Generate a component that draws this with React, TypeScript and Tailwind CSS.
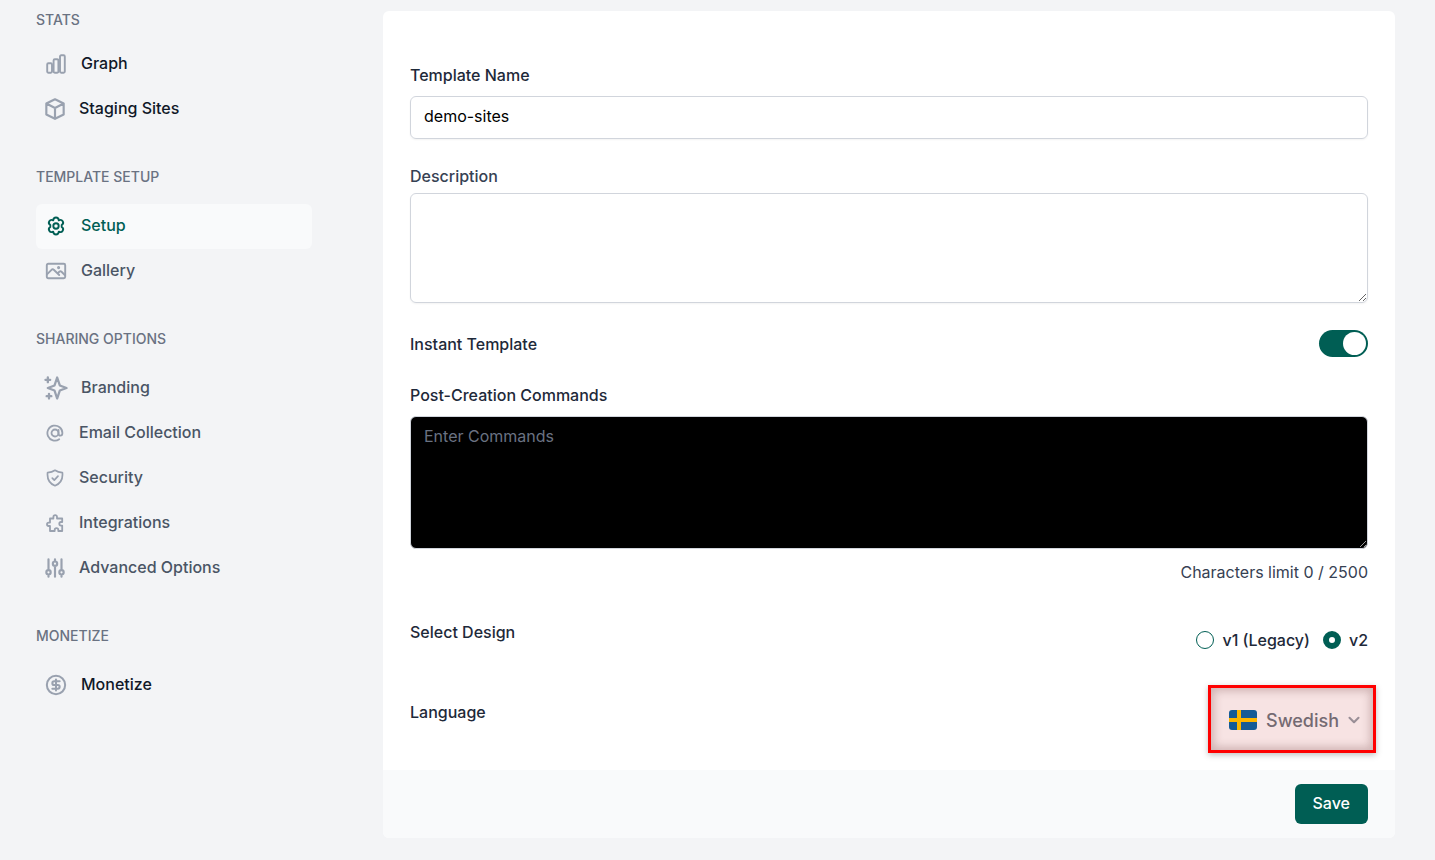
import { useState } from "react"
import type { ReactNode } from "react"
import { ChevronDown, CircleDollarSign } from "lucide-react"
import { HiOutlineAdjustments, HiOutlineCube, HiOutlineSparkles } from "react-icons/hi"

function GraphIcon() {
  return (
    <svg width="20" height="20" viewBox="0 0 20 20" fill="none" stroke="currentColor" strokeWidth="1.9">
      <rect x="1.2" y="9.2" width="4.8" height="9.6" rx="1.2" />
      <rect x="7.6" y="5.2" width="4.8" height="13.6" rx="1.2" />
      <rect x="14" y="1.2" width="4.8" height="17.6" rx="1.2" />
    </svg>
  )
}

function GearIcon() {
  return (
    <svg
      width="20"
      height="20"
      viewBox="0 0 20 20"
      fill="none"
      stroke="currentColor"
      strokeWidth="1.9"
      strokeLinejoin="round"
    >
      <path d="M7.2 4.3C7.4 2 8.200 1.500 10 1.500s2.600.5 2.800 2.800c2.100-1 3-.500 3.900 1s.9 2.500-1 3.700v2c1.900 1.200 1.900 2.200 1 3.700s-1.800 2-3.900 1c-.2 2.300-1 2.800-2.800 2.800s-2.600-.5-2.800-2.800c-2.100 1-3 .5-3.900-1s-.9-2.500 1-3.700V9c-1.900-1.200-1.900-2.200-1-3.700s1.800-2 3.900-1z" />
      <circle cx="10" cy="10" r="2.7" />
    </svg>
  )
}

function GalleryIcon() {
  return (
    <svg
      width="22"
      height="18"
      viewBox="0 0 22 18"
      fill="none"
      stroke="currentColor"
      strokeWidth="1.9"
      strokeLinecap="round"
      strokeLinejoin="round"
    >
      <rect x="1.8" y="1.8" width="18.4" height="14.4" rx="1.4" />
      <path d="M2.2 12.2l4.3-4.4a1.6 1.6 0 012.3 0l5.4 5.2M12.6 11.4l1.7-1.6a1.6 1.6 0 012.2 0l3.3 3.2" />
      <circle cx="13.6" cy="5.6" r="0.6" fill="currentColor" />
    </svg>
  )
}

function AtIcon() {
  return (
    <svg
      width="18"
      height="18"
      viewBox="0 0 18 18"
      fill="none"
      stroke="currentColor"
      strokeWidth="1.8"
      strokeLinecap="round"
    >
      <circle cx="9" cy="9" r="3.5" />
      <path d="M12.5 5.8v3.6c0 1.3.8 2.2 1.9 2.2 1.3 0 2-1.1 2-2.6a7.5 7.5 0 10-3.2 6.2" />
    </svg>
  )
}

function ShieldIcon() {
  return (
    <svg
      width="18"
      height="18"
      viewBox="0 0 18 18"
      fill="none"
      stroke="currentColor"
      strokeWidth="1.7"
      strokeLinecap="round"
      strokeLinejoin="round"
    >
      <path d="M9 1.3c2.1 1.5 4.5 2.2 7.4 2.3.6 5.9-1.6 10.9-7.4 13.1C3.2 14.5 1 9.5 1.6 3.6 4.5 3.5 6.9 2.8 9 1.3z" />
      <path d="M6.3 9.2l2 2L12 7.2" />
    </svg>
  )
}

function PuzzleIcon() {
  return (
    <svg
      width="18"
      height="18"
      viewBox="0 0 18 18"
      fill="none"
      stroke="currentColor"
      strokeWidth="1.8"
      strokeLinejoin="round"
    >
      <path d="M4 4.5h3.4V2.9a1.8 1.8 0 013.6 0v1.6h5.2V8h-1.1a1.8 1.8 0 000 3.6h1.1V17h-3.9v-1a1.8 1.8 0 00-3.6 0v1H4v-5H2.7a1.7 1.7 0 010-3.4H4z" />
    </svg>
  )
}

function SwedenFlag() {
  return (
    <svg className="shrink-0" width="28" height="20" viewBox="0 0 28 20" aria-hidden="true">
      <clipPath id="flag">
        <rect width="28" height="20" rx="3" />
      </clipPath>
      <g clipPath="url(#flag)">
        <rect width="28" height="20" fill="#155b97" />
        <path d="M8 0h4v20H8zM0 8h28v4H0z" fill="#fdb600" />
      </g>
    </svg>
  )
}

interface NavItem {
  label: string
  icon: ReactNode
  wide?: boolean
  dark?: boolean
  active?: boolean
}

const sections: { title: string; items: NavItem[] }[] = [
  {
    title: "STATS",
    items: [
      { label: "Graph", icon: <GraphIcon />, wide: true, dark: true },
      { label: "Staging Sites", icon: <HiOutlineCube size={26} />, dark: true },
    ],
  },
  {
    title: "TEMPLATE SETUP",
    items: [
      { label: "Setup", icon: <GearIcon />, wide: true, active: true },
      { label: "Gallery", icon: <GalleryIcon />, wide: true },
    ],
  },
  {
    title: "SHARING OPTIONS",
    items: [
      { label: "Branding", icon: <HiOutlineSparkles size={28} />, wide: true },
      { label: "Email Collection", icon: <AtIcon /> },
      { label: "Security", icon: <ShieldIcon /> },
      { label: "Integrations", icon: <PuzzleIcon /> },
      { label: "Advanced Options", icon: <HiOutlineAdjustments size={26} /> },
    ],
  },
  {
    title: "MONETIZE",
    items: [
      { label: "Monetize", icon: <CircleDollarSign size={22} strokeWidth={2.2} />, wide: true, dark: true },
    ],
  },
]

function NavLink({ item }: { item: NavItem }) {
  const color = item.active ? "text-[#005e54]" : item.dark ? "text-gray-900" : "text-gray-600"

  return (
    <a
      href="#"
      className={`flex h-[45px] items-center gap-[11px] rounded-md px-1.5 pb-0.5 ${color} ${item.active ? "bg-gray-50" : ""}`}
    >
      <span
        className={`flex shrink-0 items-center justify-center ${item.wide ? "w-7" : "w-[26px]"} ${item.active ? "" : "text-gray-400"}`}
      >
        {item.icon}
      </span>
      <span className="pb-0.5">{item.label}</span>
    </a>
  )
}

function Sidebar() {
  return (
    <nav className="w-[276px] shrink-0 pt-2.5">
      {sections.map((section, i) => (
        <section key={section.title} className={i === 0 ? "" : "mt-[35px]"}>
          <h2 className={`text-sm text-gray-500 ${i === 0 ? "mb-3" : "mb-[17px]"}`}>{section.title}</h2>
          {section.items.map((item) => (
            <NavLink key={item.label} item={item} />
          ))}
        </section>
      ))}
    </nav>
  )
}

export default function App() {
  const [name, setName] = useState("demo-sites")
  const [description, setDescription] = useState("")
  const [instant, setInstant] = useState(true)
  const [commands, setCommands] = useState("")
  const [design, setDesign] = useState("v2")

  const radio =
    "size-[18px] appearance-none rounded-full border border-[#005e54] bg-white checked:border-[6px]"

  return (
    <div className="flex min-h-screen items-start bg-gray-100 pr-10 pl-9 font-['Inter',sans-serif] text-base font-medium text-gray-800">
      <Sidebar />

      <form
        className="mt-[11px] mb-[22px] ml-[71px] min-w-0 flex-1 overflow-hidden rounded-md bg-white"
        onSubmit={(e) => e.preventDefault()}
      >
        <div className="flex flex-col px-[27px] pt-[52px] pb-[17px]">
          <label htmlFor="name">Template Name</label>
          <input
            id="name"
            value={name}
            onChange={(e) => setName(e.target.value)}
            className="mt-[9px] h-[43px] w-full rounded-md border border-gray-300 px-[13px] pb-1 font-normal text-black shadow-xs outline-none"
          />

          <label htmlFor="description" className="mt-[25px] text-gray-700">
            Description
          </label>
          <textarea
            id="description"
            value={description}
            onChange={(e) => setDescription(e.target.value)}
            className="mt-[5px] h-[110px] w-full resize-y rounded-md border border-gray-300 px-[13px] py-2 font-normal shadow-xs outline-none"
          />

          <div className="mt-[27px] flex items-center justify-between">
            <label htmlFor="instant">Instant Template</label>
            <button
              id="instant"
              type="button"
              role="switch"
              aria-checked={instant}
              onClick={() => setInstant(!instant)}
              className={`flex h-[27px] w-[49px] items-center rounded-full px-0.5 ${instant ? "justify-end bg-[#005e54]" : "bg-gray-300"}`}
            >
              <span className="size-[23px] rounded-full bg-white" />
            </button>
          </div>

          <label htmlFor="commands" className="mt-[26px]">
            Post-Creation Commands
          </label>
          <textarea
            id="commands"
            value={commands}
            onChange={(e) => setCommands(e.target.value)}
            placeholder="Enter Commands"
            maxLength={2500}
            className="mt-[9px] h-[133px] w-full resize-y rounded-md border border-gray-300 bg-black px-[13px] py-[7px] font-normal text-white outline-none placeholder:text-gray-500"
          />
          <p className="mt-[11px] text-right font-normal text-gray-700">
            Characters limit {commands.length} / 2500
          </p>

          <fieldset className="mt-9 flex items-start justify-between">
            <legend className="float-left">Select Design</legend>
            <div className="flex items-center gap-[13px] pt-2">
              <label className="flex items-center gap-2">
                <input
                  type="radio"
                  name="design"
                  checked={design === "v1"}
                  onChange={() => setDesign("v1")}
                  className={radio}
                />
                v1 (Legacy)
              </label>
              <label className="flex items-center gap-2">
                <input
                  type="radio"
                  name="design"
                  checked={design === "v2"}
                  onChange={() => setDesign("v2")}
                  className={radio}
                />
                v2
              </label>
            </div>
          </fieldset>

          <div className="mt-[33px] flex items-start justify-between">
            <label htmlFor="language" className="pt-[15px]">
              Language
            </label>
            <div className="-mr-2 flex h-[68px] w-[168px] items-center border-[3px] border-[#ff0000] bg-[#f7e3e3] pt-0.5 pl-[18px] shadow-[0_2px_6px_rgba(0,0,0,0.25),inset_0_0_8px_3px_rgba(90,40,40,0.25)]">
              <SwedenFlag />
              <div className="relative flex-1 pt-0.5">
                <select
                  id="language"
                  defaultValue="sv"
                  className="w-full appearance-none bg-transparent pl-[9px] text-lg text-[#746a72] outline-none"
                >
                  <option value="sv">Swedish</option>
                </select>
                <ChevronDown
                  size={18}
                  strokeWidth={2.8}
                  className="pointer-events-none absolute top-1/2 right-2.5 -translate-y-1/2 text-[#998e96]"
                />
              </div>
            </div>
          </div>
        </div>

        <div className="flex justify-end bg-gray-50 px-[27px] py-3.5">
          <button type="submit" className="h-10 rounded-md bg-[#005e54] px-[18px] pb-0.5 text-white">
            Save
          </button>
        </div>
      </form>
    </div>
  )
}
